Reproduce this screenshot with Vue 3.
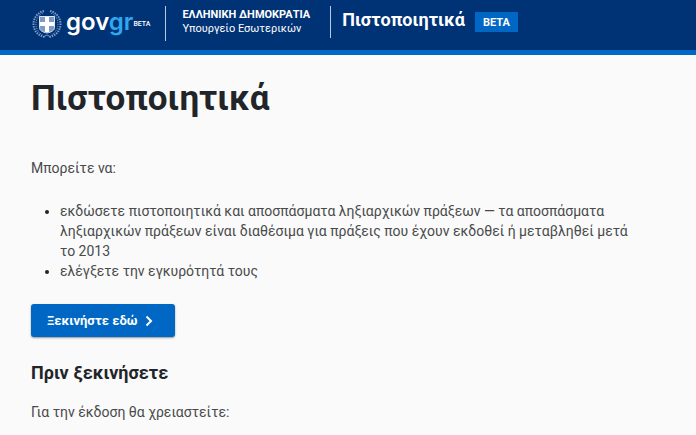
<template>
  <div class="page">
    <header class="header">
      <a href="#" class="logo" aria-label="govgr BETA">
        <svg class="emblem" viewBox="0 0 30 30" aria-hidden="true">
          <g fill="none" stroke="#7f9ac6">
            <path d="M12 2C5.500 3.500 1.500 9 1.500 15s4 11.500 11 13" stroke-width="2" stroke-dasharray="1.500 1" />
            <path d="M18 2c6.500 1.500 10.500 7 10.500 13s-4 11.500-11 13" stroke-width="2" stroke-dasharray="1.500 1" />
            <path d="M11 4C6 6 4 10.500 4 15s2.500 9 7 11M19 4c5 2 7 6.500 7 11s-2.500 9-7 11" stroke-width="1" stroke-dasharray="1 1" />
            <path d="M11 28l4-2 4 2" stroke-width="1" />
          </g>
          <path d="M7.500 7.500h15v11c0 3-3 4.500-7.500 5.500-4.500-1-7.500-2.500-7.500-5.500z" fill="#7f9ac6" stroke="#dbe5f3" />
          <path d="M13 8h4v5h5v4h-5v6h-4v-6H8v-4h5z" fill="#fff" />
        </svg>
        <span class="wordmark">gov<span class="wordmark-gr">gr</span></span>
        <span class="logo-beta">BETA</span>
      </a>
      <div class="ministry">
        <strong>ΕΛΛΗΝΙΚΗ ΔΗΜΟΚΡΑΤΙΑ</strong>
        <span>Υπουργείο Εσωτερικών</span>
      </div>
      <div class="service">
        <a href="#" class="service-name">Πιστοποιητικά</a>
        <span class="tag">BETA</span>
      </div>
    </header>

    <main class="content">
      <h1>Πιστοποιητικά</h1>
      <p>Μπορείτε να:</p>
      <ul>
        <li v-for="item in actions" :key="item">{{ item }}</li>
      </ul>
      <button type="button" class="start">
        Ξεκινήστε εδώ
        <svg viewBox="0 0 8 12" aria-hidden="true">
          <path d="M1.500 1.500L6 6l-4.500 4.500" fill="none" stroke="#fff" stroke-width="2" />
        </svg>
      </button>
      <h2>Πριν ξεκινήσετε</h2>
      <p>Για την έκδοση θα χρειαστείτε:</p>
    </main>
  </div>
</template>

<script setup>
const actions = [
  'εκδώσετε πιστοποιητικά και αποσπάσματα ληξιαρχικών πράξεων — τα αποσπάσματα ληξιαρχικών πράξεων είναι διαθέσιμα για πράξεις που έχουν εκδοθεί ή μεταβληθεί μετά το 2013',
  'ελέγξετε την εγκυρότητά τους'
]
</script>

<style>
body {
  margin: 0;
  background: #fafafa;
}
</style>

<style scoped>
.page {
  font-family: Roboto, 'Liberation Sans', sans-serif;
  font-size: 14px;
  line-height: 20px;
  color: #484a4b;
}

.header {
  display: flex;
  align-items: flex-start;
  padding: 6px 32px 4px;
  height: 40px;
  background: #003375;
  border-bottom: 5px solid #0068c4;
  color: #fff;
}

.logo {
  display: flex;
  align-items: center;
  height: 35px;
  padding-right: 15px;
  border-right: 1px solid #b9c9e2;
  color: #fff;
  text-decoration: none;
}

.emblem {
  width: 30px;
  height: 30px;
  margin-right: 4px;
}

.wordmark {
  font-family: Inter, sans-serif;
  font-size: 24px;
  line-height: 28px;
  font-weight: 600;
  padding-bottom: 4px;
}

.wordmark-gr {
  color: #2fa8ee;
}

.logo-beta {
  font-size: 7px;
  font-weight: 500;
  line-height: 8px;
  padding-top: 1px;
}

.ministry {
  display: flex;
  flex-direction: column;
  height: 32px;
  padding: 0 20px 0 16px;
  border-right: 1px solid #b9c9e2;
  font-size: 11px;
  line-height: 14px;
  white-space: nowrap;
}

.ministry strong {
  padding-top: 2px;
  font-weight: 700;
}

.service {
  display: flex;
  align-items: center;
  gap: 10px;
  padding: 2px 0 0 11px;
}

.service-name {
  color: #fff;
  font-size: 18px;
  font-weight: 700;
  text-decoration: none;
}

.tag {
  padding: 2px 8px 0;
  margin-top: 4px;
  background: #0068c4;
  font-size: 11px;
  line-height: 18px;
  font-weight: 700;
}

.content {
  max-width: 608px;
  padding: 20px 31px;
}

h1 {
  margin: 0 0 32px;
  color: #212529;
  font-size: 35px;
  line-height: 48px;
  font-weight: 700;
}

p {
  margin: 0;
}

h1 + p {
  padding-top: 3px;
}

ul {
  margin: 23px 0;
  padding-left: 29px;
}

li::marker {
  color: #212529;
}

.start {
  display: flex;
  align-items: center;
  gap: 8px;
  height: 33px;
  padding: 0 22px 0 16px;
  border: 0;
  border-radius: 3px;
  background: #0068c4;
  box-shadow: 0 1px 2px rgba(0, 0, 0, 0.4);
  color: #fff;
  font-family: inherit;
  font-size: 13px;
  font-weight: 700;
  cursor: pointer;
}

.start svg {
  width: 8px;
  height: 12px;
}

h2 {
  margin: 24px 0 17px;
  color: #212529;
  font-size: 18px;
  line-height: 24px;
  font-weight: 700;
}
</style>
